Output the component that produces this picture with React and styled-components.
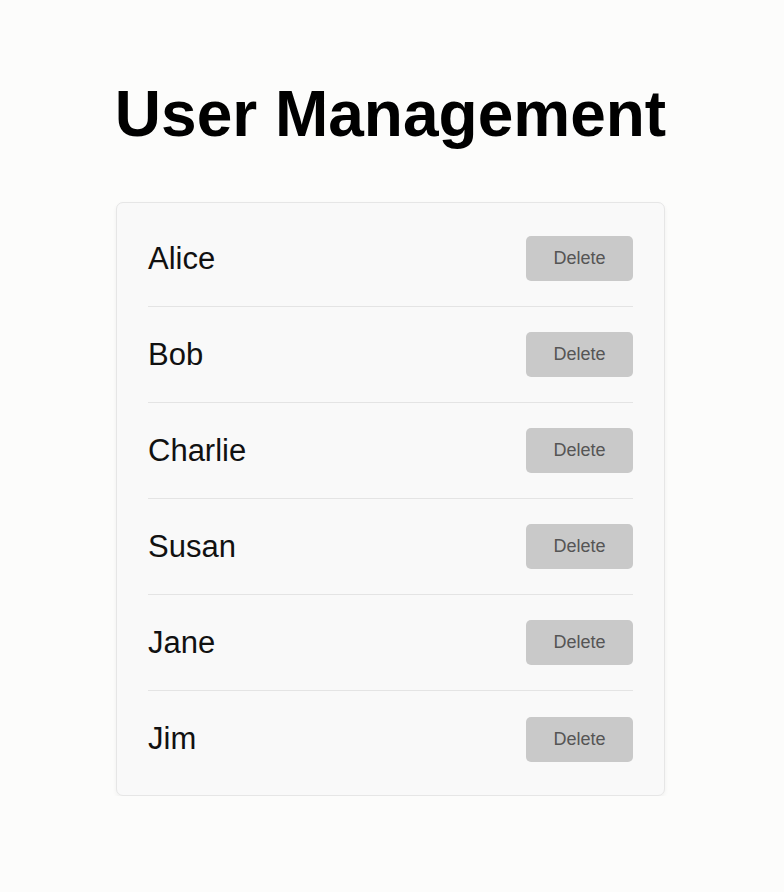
import styled, { createGlobalStyle } from "styled-components";

const GlobalStyle = createGlobalStyle`
  body {
    margin: 0;
    background: #fcfcfb;
    font-family: "Liberation Sans", Arial, sans-serif;
  }
`;

const Page = styled.div`
  padding: 77px 3px 0 0;
  display: flex;
  flex-direction: column;
  align-items: center;
`;

const Title = styled.h1`
  margin: 0 0 51px;
  font-size: 64px;
  font-weight: 700;
  color: #000;
`;

const Card = styled.ul`
  list-style: none;
  margin: 0;
  width: 549px;
  box-sizing: border-box;
  padding: 8px 31px;
  background: #f9f9f9;
  border: 1px solid #e6e6e6;
  border-radius: 7px;
  box-shadow: 0 2px 4px rgba(0, 0, 0, 0.05);
`;

const Row = styled.li`
  height: 95px;
  display: flex;
  align-items: center;
  justify-content: space-between;
  border-bottom: 1px solid #e4e4e4;

  &:last-child {
    height: 96px;
    border-bottom: none;
  }
`;

const Name = styled.span`
  font-size: 31px;
  color: #111;
`;

const DeleteButton = styled.button`
  width: 107px;
  height: 45px;
  border: none;
  border-radius: 5px;
  background: #c9c9c9;
  color: #555;
  font-family: "Liberation Sans", Arial, sans-serif;
  font-size: 18px;
  cursor: pointer;
`;

const users = ["Alice", "Bob", "Charlie", "Susan", "Jane", "Jim"];

const App = () => {
  return (
    <>
      <GlobalStyle />
      <Page>
        <Title>User Management</Title>
        <Card>
          {users.map((name) => (
            <Row key={name}>
              <Name>{name}</Name>
              <DeleteButton>Delete</DeleteButton>
            </Row>
          ))}
        </Card>
      </Page>
    </>
  );
};

export default App;
